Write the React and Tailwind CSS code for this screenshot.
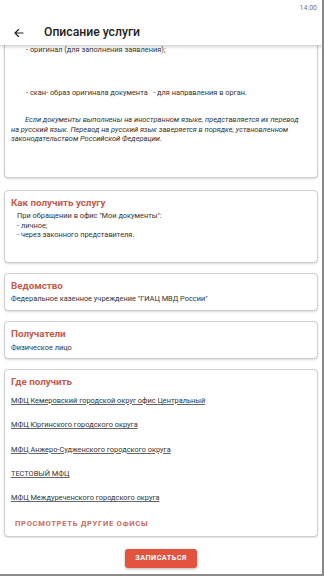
import React from 'react';

const font = { fontFamily: 'Roboto, "Noto Sans", sans-serif' };

const offices = [
  'МФЦ Кемеровский городской округ офис Центральный',
  'МФЦ Юргинского городского округа',
  'МФЦ Анжеро-Судженского городского округа',
  'ТЕСТОВЫЙ МФЦ',
  'МФЦ Междуреченского городского округа',
];

function Card({ title, children, className = '' }) {
  return (
    <div className={`bg-white border border-[#cfcfcf] rounded-[4px] shadow-[0_1px_2px_rgba(0,0,0,0.15)] px-[6px] ${className}`}>
      {title && (
        <h2 className="text-[9.8px] leading-[14px] font-bold text-[#c65a4e]">{title}</h2>
      )}
      {children}
    </div>
  );
}

export default function App() {
  return (
    <div style={font} className="w-[324px] h-[576px] flex flex-col bg-white border-r-2 border-b-2 border-[#8a8a8a] overflow-hidden text-[#333]">
      {/* status bar */}
      <div className="h-[20px] flex justify-end items-start pr-[5px] pt-[3px] text-[7px] text-[#777]">14:00</div>

      {/* toolbar */}
      <div className="h-[25px] shrink-0 flex items-center pl-[13px] relative z-10 bg-white shadow-[0_2px_3px_rgba(0,0,0,0.18)]">
        <svg width="12" height="12" viewBox="0 0 24 24" fill="none" stroke="#222" strokeWidth="2.2" strokeLinecap="round" strokeLinejoin="round">
          <path d="M20 12H4M11 5l-7 7 7 7" />
        </svg>
        <span className="ml-[19px] text-[12.2px] font-medium text-[#222]">Описание услуги</span>
      </div>

      {/* scroll area */}
      <div className="flex-1 overflow-hidden px-[4px] flex flex-col gap-[10px]">
        <div className="bg-white border-x border-b border-[#cfcfcf] rounded-b-[4px] shadow-[0_1px_2px_rgba(0,0,0,0.15)] px-[6px] h-[133px] shrink-0 text-[7.4px] leading-[9.6px]">
          <p className="pl-[15px]">- оригинал (для заполнения заявления);</p>
          <p className="pl-[15px] mt-[33px]">- скан- образ оригинала документа &nbsp; - для направления в орган.</p>
          <p className="italic indent-[14px] mt-[18px] pr-[8px]">
            Если документы выполнены на иностранном языке, представляется их перевод на русский язык. Перевод на русский язык заверяется в порядке, установленном законодательством Российской Федерации.
          </p>
        </div>

        <Card title="Как получить услугу" className="pt-[5px] h-[73px] shrink-0 mt-[2px]">
          <div className="pl-[6px] mt-[1px] text-[7.4px] leading-[9.6px]">
            <p>При обращении в офис "Мои документы":</p>
            <p>- личное;</p>
            <p>- через законного представителя.</p>
          </div>
        </Card>

        <Card title="Ведомство" className="pt-[5px] h-[38px] shrink-0">
          <p className="text-[7.4px] leading-[10px] mt-[1px]">Федеральное казенное учреждение "ГИАЦ МВД России"</p>
        </Card>

        <Card title="Получатели" className="pt-[5px] h-[38px] shrink-0">
          <p className="text-[7.4px] leading-[10px] mt-[2px]">Физическое лицо</p>
        </Card>

        <Card title="Где получить" className="pt-[5px] h-[168px] shrink-0">
          <div className="flex flex-col gap-[14.3px] mt-[7px]">
            {offices.map((o) => (
              <a key={o} className="text-[7.4px] leading-[10px] underline decoration-[#666] underline-offset-[1px] text-[#333]">{o}</a>
            ))}
          </div>
          <div className="mt-[15px] pl-[4px] text-[7.6px] font-bold tracking-[0.09em] text-[#c96b60]">ПРОСМОТРЕТЬ ДРУГИЕ ОФИСЫ</div>
        </Card>
      </div>

      {/* bottom */}
      <div className="h-[36px] shrink-0 flex items-start justify-center pt-[11px]">
        <button className="w-[72px] h-[19px] rounded-[3px] bg-[#e4533d] text-white text-[7.3px] font-bold tracking-[0.06em] shadow-[0_1px_3px_rgba(0,0,0,0.3)]">
          ЗАПИСАТЬСЯ
        </button>
      </div>
    </div>
  );
}
